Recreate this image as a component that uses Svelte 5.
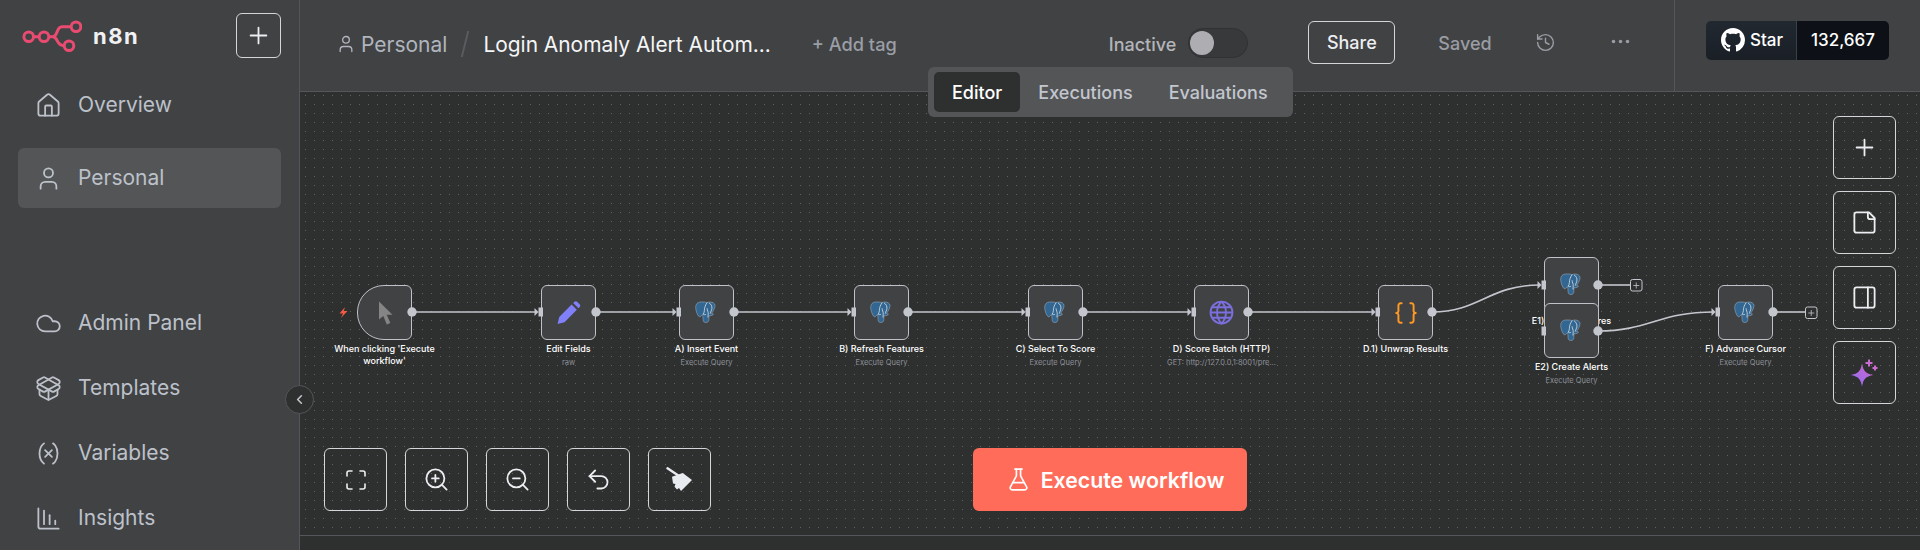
<script>
  const nodes = [
    { x: 358, y: 285, label: "When clicking 'Execute workflow'", icon: 'cursor', trigger: true, lw: 112 },
    { x: 542, y: 285, label: 'Edit Fields', sub: 'raw', icon: 'pen' },
    { x: 680, y: 285, label: 'A) Insert Event', sub: 'Execute Query', icon: 'pg' },
    { x: 855, y: 285, label: 'B) Refresh Features', sub: 'Execute Query', icon: 'pg' },
    { x: 1029, y: 285, label: 'C) Select To Score', sub: 'Execute Query', icon: 'pg' },
    { x: 1195, y: 285, label: 'D) Score Batch (HTTP)', sub: 'GET: http://127.0.0.1:8001/pre...', icon: 'globe' },
    { x: 1379, y: 285, label: 'D.1) Unwrap Results', icon: 'braces' },
    { x: 1545, y: 257, label: 'E1) Insert Features', sub: 'Execute Query', icon: 'pg' },
    { x: 1545, y: 303, label: 'E2) Create Alerts', sub: 'Execute Query', icon: 'pg' },
    { x: 1719, y: 285, label: 'F) Advance Cursor', sub: 'Execute Query', icon: 'pg' }
  ];
  const inputs = [[542, 312], [680, 312], [855, 312], [1029, 312], [1195, 312], [1379, 312], [1545, 285], [1719, 312]];
  const outputs = [[413, 312], [597, 312], [735, 312], [909, 312], [1084, 312], [1249, 312], [1433, 312], [1599, 285], [1599, 331], [1774, 312]];
  const edges = [
    'M413 312H537', 'M597 312H676', 'M735 312H851', 'M909 312H1025', 'M1084 312H1191', 'M1249 312H1375',
    'M1433 312C1480 312 1490 285 1541 285',
    'M1599 285H1631', 'M1599 331C1650 331 1660 312 1715 312', 'M1774 312H1806'
  ];
  const plusBoxes = [[1631, 279], [1806, 306.5]];
</script>

{#snippet lucide(size, paths)}
  <svg class="ic" width={size} height={size} viewBox="0 0 24 24" fill="none" stroke="currentColor" stroke-width="1.6" stroke-linecap="round" stroke-linejoin="round">
    {#each paths as d}<path {d} />{/each}
  </svg>
{/snippet}

{#snippet pg()}
  <svg width="23" height="23" viewBox="0 0 24 24">
    <path fill="#336791" stroke="#dfe8f0" stroke-width=".35" d="M6 1C2.800 1 .5 3.200.7 7c.2 3.200 1.500 7 3 8.800.9 1.100 2 .8 3-.4l1.100-1.200c.3 1 .6 3.200.6 5.200 0 2 1.100 3.100 2.800 3.100 2.200 0 3.300-1.300 3.300-3.200v-4c1 .2 2.100.1 3.100-.3 1.200-.5 2-1.100 1.500-1.600-.5-.5-1.600.2-1.800-.4 1.700-2.500 3.500-5.200 3.600-8.300C21 2.600 18.300 1 15.700 1c-1.300 0-2.400.3-3.100.7-1-.5-2.100-.7-3.100-.7-1.200 0-2.400.1-3.500 0z"/>
    <path fill="none" stroke="#e6edf3" stroke-width=".75" stroke-linecap="round" d="M12.500 1.900C11 4 9.700 7 9.800 10c0 1.500-.6 2.300-1 3.400M8.600 13.600c.8.800 1.800 1 2.600.4M12.600 8c0 2 1.400 3 1.200 5.400-.1 1-.2 2.400-.2 3.400M15 2.200c2 1.200 3 3.400 2.600 6-.2 1.400-1.200 2.800-1.600 4.600"/>
  </svg>
{/snippet}

<div class="app">
  <aside class="side">
    <div class="brand">
      <div class="logo">
        <svg width="60" height="32" viewBox="22 21 60 32" fill="none" stroke="#ea4b71" stroke-width="3">
          <circle cx="28.7" cy="37.7" r="4.8"/>
          <circle cx="44" cy="37.7" r="4.8"/>
          <circle cx="76" cy="27.7" r="4.8"/>
          <circle cx="69" cy="46.7" r="4.8"/>
          <path d="M33.5 37.7H39.2M48.8 37.7H53c5 0 3-10 9-10H71M53 37.7c5 0 3 9 11.200 9"/>
        </svg>
        <span class="word">n8n</span>
      </div>
      <button class="outline new" aria-label="New">
        {@render lucide(27, ['M5 12h14', 'M12 5v14'])}
      </button>
    </div>
    <nav class="nav-top">
      <a class="item">{@render lucide(27, ['M15 21v-8a1 1 0 0 0-1-1h-4a1 1 0 0 0-1 1v8', 'M3 10a2 2 0 0 1 .709-1.528l7-5.999a2 2 0 0 1 2.582 0l7 5.999A2 2 0 0 1 21 10v9a2 2 0 0 1-2 2H5a2 2 0 0 1-2-2z'])}<span>Overview</span></a>
      <a class="item active">{@render lucide(27, ['M19 21v-2a4 4 0 0 0-4-4H9a4 4 0 0 0-4 4v2', 'M16 7a4 4 0 1 1-8 0 4 4 0 0 1 8 0'])}<span>Personal</span></a>
    </nav>
    <nav class="nav-bottom">
      <a class="item">{@render lucide(27, ['M17.5 19H9a7 7 0 1 1 6.71-9h1.79a4.5 4.5 0 1 1 0 9Z'])}<span>Admin Panel</span></a>
      <a class="item">{@render lucide(27, ['M12 22v-9', 'M15.17 2.21a1.67 1.67 0 0 1 1.63 0L21 4.57a1.93 1.93 0 0 1 0 3.36L8.82 14.79a1.655 1.655 0 0 1-1.64 0L3 12.43a1.93 1.93 0 0 1 0-3.36z', 'M20 13v3.87a2.06 2.06 0 0 1-1.11 1.83l-6 3.08a1.93 1.93 0 0 1-1.78 0l-6-3.08A2.06 2.06 0 0 1 4 16.87V13', 'M21 12.43a1.93 1.93 0 0 0 0-3.36L8.83 2.2a1.64 1.64 0 0 0-1.63 0L3 4.57a1.93 1.93 0 0 0 0 3.36l12.18 6.86a1.636 1.636 0 0 0 1.63 0z'])}<span>Templates</span></a>
      <a class="item">{@render lucide(27, ['M8 21s-4-3-4-9 4-9 4-9', 'M16 3s4 2 4 9-4 9-4 9', 'M15 9l-6 6', 'M9 9l6 6'])}<span>Variables</span></a>
      <a class="item">{@render lucide(27, ['M13 17V9', 'M18 17v-3', 'M3 3v16a2 2 0 0 0 2 2h16', 'M8 17V5'])}<span>Insights</span></a>
    </nav>
  </aside>

  <main class="main">
    <header class="head">
      <div class="crumb">
        {@render lucide(20, ['M19 21v-2a4 4 0 0 0-4-4H9a4 4 0 0 0-4 4v2', 'M16 7a4 4 0 1 1-8 0 4 4 0 0 1 8 0'])}
        <span class="crumb-name">Personal</span>
      </div>
      <span class="slash"></span>
      <span class="title">Login Anomaly Alert Autom...</span>
      <span class="tag">+ Add tag</span>
      <span class="inactive">Inactive</span>
      <span class="toggle"><span class="knob"></span></span>
      <button class="outline share">Share</button>
      <span class="saved">Saved</span>
      <span class="history">{@render lucide(21, ['M3 12a9 9 0 1 0 9-9 9.75 9.75 0 0 0-6.74 2.74L3 8', 'M3 3v5h5', 'M12 7v5l4 2'])}</span>
      <span class="more">
        <svg width="21" height="21" viewBox="0 0 24 24" fill="currentColor"><circle cx="4" cy="12" r="2"/><circle cx="12" cy="12" r="2"/><circle cx="20" cy="12" r="2"/></svg>
      </span>
      <div class="gh-wrap">
        <div class="gh">
          <span class="gh-star">
            <svg width="24" height="24" viewBox="0 0 16 16" fill="#fff"><path d="M8 0C3.58 0 0 3.58 0 8c0 3.54 2.29 6.53 5.47 7.59.4.07.55-.17.55-.38 0-.19-.01-.82-.01-1.49-2.01.37-2.53-.49-2.69-.94-.09-.23-.48-.94-.82-1.13-.28-.15-.68-.52-.01-.53.63-.01 1.08.58 1.23.82.72 1.21 1.87.87 2.33.66.07-.52.28-.87.51-1.07-1.78-.2-3.64-.89-3.64-3.95 0-.87.31-1.59.82-2.15-.08-.2-.36-1.02.08-2.12 0 0 .67-.21 2.2.82.64-.18 1.32-.27 2-.27.68 0 1.36.09 2 .27 1.53-1.04 2.2-.82 2.2-.82.44 1.1.16 1.92.08 2.12.51.56.82 1.27.82 2.15 0 3.07-1.87 3.75-3.65 3.95.29.25.54.73.54 1.48 0 1.07-.01 1.93-.01 2.2 0 .21.15.46.55.38A8.013 8.013 0 0016 8c0-4.42-3.58-8-8-8z"/></svg>
            Star
          </span>
          <span class="gh-count">132,667</span>
        </div>
      </div>
    </header>

    <section class="canvas">
      {#each nodes as n}
        <div class="node" style="left:{n.x - 301}px;top:{n.y - 92}px">
          <div class="box" class:trigger={n.trigger}>
            {#if n.icon === 'cursor'}
              <svg width="24" height="24" viewBox="0 0 24 24" fill="#858585"><path d="M6 .5V18.500L10.300 14.900L13.800 23.500L17.300 22L13.800 13.800H19.500Z"/></svg>
            {:else if n.icon === 'pen'}
              <svg width="25" height="25" viewBox="0 0 24 24" fill="#8080f8"><path d="M1.500 23l1.600-6.800L15 4.300l5 5L8.200 21.300z"/><path d="M16.500 2.800l.9-.9a2.200 2.200 0 0 1 3.100 0l2 2a2.200 2.200 0 0 1 0 3.100l-.9.9z"/></svg>
            {:else if n.icon === 'pg'}
              {@render pg()}
            {:else if n.icon === 'globe'}
              <svg width="25" height="25" viewBox="0 0 24 24" fill="none" stroke="#7b6fdd" stroke-width="1.800"><circle cx="12" cy="12" r="10.500"/><path d="M12 1.500a15 15 0 0 0 0 21 15 15 0 0 0 0-21M1.500 12h21M3 7h18M3 17h18"/></svg>
            {:else if n.icon === 'braces'}
              <svg width="26" height="26" viewBox="0 0 24 24" fill="none" stroke="#ff9922" stroke-width="1.800" stroke-linecap="round" stroke-linejoin="round"><path d="M8 3H7a2 2 0 0 0-2 2v5a2 2 0 0 1-2 2 2 2 0 0 1 2 2v5a2 2 0 0 0 2 2h1"/><path d="M16 21h1a2 2 0 0 0 2-2v-5a2 2 0 0 1 2-2 2 2 0 0 1-2-2V5a2 2 0 0 0-2-2h-1"/></svg>
            {/if}
          </div>
          <div class="label" style={n.lw ? `width:${n.lw}px` : ''}>{n.label}</div>
          {#if n.sub}<div class="sub">{n.sub}</div>{/if}
        </div>
      {/each}

      <svg class="wires" width="1619" height="443" viewBox="301 92 1619 443" fill="none">
        {#each edges as d}<path {d} stroke="#c3c6cd" stroke-width="1.600"/>{/each}
        {#each inputs as [x, y]}
          <path d="M{x - 6.500} {y - 4}L{x - 2.500} {y}L{x - 6.500} {y + 4}Z" fill="#c3c6cd"/>
          <rect x={x - 2.500} y={y - 4.500} width="4.500" height="9" fill="#c3c6cd"/>
        {/each}
        <rect x="1542.500" y="326.500" width="4.500" height="9" fill="#c3c6cd"/>
        {#each outputs as [x, y]}<circle cx={x} cy={y} r="4.700" fill="#c3c6cd"/>{/each}
        {#each plusBoxes as [x, y]}
          <rect x={x + .5} y={y + .5} width="11.500" height="11.500" rx="2" fill="#2e2f2f" stroke="#c3c6cd"/>
          <path d="M{x + 6.250} {y + 3.500}v6M{x + 3.250} {y + 6.500}h6" stroke="#c3c6cd" stroke-width=".8"/>
        {/each}
        <path d="M346 307L340.500 313.500H344L342 318L348.500 311H344.800Z" fill="#ee5b46"/>
      </svg>

      <div class="tools-right">
        <button class="outline tool">{@render lucide(27, ['M5 12h14', 'M12 5v14'])}</button>
        <button class="outline tool">{@render lucide(27, ['M16 3H5a2 2 0 0 0-2 2v14a2 2 0 0 0 2 2h14a2 2 0 0 0 2-2V8Z', 'M15 3v4a2 2 0 0 0 2 2h4'])}</button>
        <button class="outline tool">{@render lucide(27, ['M5 3h14a2 2 0 0 1 2 2v14a2 2 0 0 1-2 2H5a2 2 0 0 1-2-2V5a2 2 0 0 1 2-2z', 'M15 3v18'])}</button>
        <button class="outline tool" aria-label="AI">
          <svg width="33" height="33" viewBox="0 0 33 33">
            <defs><linearGradient id="sp" x1="0" y1="1" x2="1" y2="0"><stop offset="0" stop-color="#8a6cf5"/><stop offset="1" stop-color="#d168c8"/></linearGradient></defs>
            <path fill="url(#sp)" d="M14 7.500c1.300 7.500 3.500 10 11.500 11.500-8 1.500-10.200 4-11.500 11.500C12.700 23 10.500 20.500 2.500 19c8-1.500 10.200-4 11.500-11.500z"/>
            <path fill="none" stroke="#c96bd0" stroke-width="2" d="M21 3.500v7M17.500 7h7M27 9.500v5M24.500 12h5"/>
          </svg>
        </button>
      </div>

      <div class="tools-bottom">
        <button class="outline tool">{@render lucide(24, ['M8 3H5a2 2 0 0 0-2 2v3', 'M21 8V5a2 2 0 0 0-2-2h-3', 'M3 16v3a2 2 0 0 0 2 2h3', 'M16 21h3a2 2 0 0 0 2-2v-3'])}</button>
        <button class="outline tool">{@render lucide(27, ['M19 11a8 8 0 1 1-16 0 8 8 0 0 1 16 0', 'M21 21l-4.350-4.350', 'M11 8v6', 'M8 11h6'])}</button>
        <button class="outline tool">{@render lucide(27, ['M19 11a8 8 0 1 1-16 0 8 8 0 0 1 16 0', 'M21 21l-4.350-4.350', 'M8 11h6'])}</button>
        <button class="outline tool">{@render lucide(27, ['M9 14 4 9l5-5', 'M4 9h10.500a5.500 5.500 0 0 1 5.500 5.500 5.500 5.500 0 0 1-5.500 5.500H11'])}</button>
        <button class="outline tool" aria-label="Tidy up">
          <svg width="27" height="27" viewBox="0 0 27 27" fill="#e8ebf0"><path d="M1.500 2.300L13 10" stroke="#e8ebf0" stroke-width="2.400" stroke-linecap="round"/><path d="M6 10.700L16.700 7L26 14L15 25L13 22L11 23.500L8.500 20.700L9.500 18L7 17.500Z"/></svg>
        </button>
        <button class="run">
          {@render lucide(25, ['M14 2v6a2 2 0 0 0 .245.96l5.510 10.080A2 2 0 0 1 18 22H6a2 2 0 0 1-1.755-2.960l5.510-10.080A2 2 0 0 0 10 8V2', 'M6.453 15h11.094', 'M8.500 2h7'])}
          Execute workflow
        </button>
      </div>
    </section>
    <div class="logbar"></div>
  </main>

  <button class="collapse" aria-label="Collapse">
    <svg width="15" height="15" viewBox="0 0 24 24" fill="none" stroke="currentColor" stroke-width="2.5" stroke-linecap="round" stroke-linejoin="round"><path d="m15 18-6-6 6-6"/></svg>
  </button>

  <div class="tabs">
    <span class="tab on">Editor</span>
    <span class="tab">Executions</span>
    <span class="tab">Evaluations</span>
  </div>
</div>

<style>
  :global(body) { margin: 0; background: #2e2f2f; }
  .app {
    position: relative;
    display: flex;
    width: 1920px;
    height: 550px;
    overflow: hidden;
    font-family: Inter, "Liberation Sans", sans-serif;
    color: #fff;
  }
  button { font-family: inherit; cursor: pointer; padding: 0; }
  .ic { display: block; flex: none; }

  .outline {
    display: flex;
    align-items: center;
    justify-content: center;
    background: transparent;
    border: 1.500px solid #d4d6da;
    border-radius: 6px;
    color: #eceef1;
  }

  .side {
    flex: none;
    width: 300px;
    height: 550px;
    box-sizing: border-box;
    background: #414244;
    border-right: 1px solid #55565a;
    display: flex;
    flex-direction: column;
  }
  .brand {
    display: flex;
    align-items: center;
    justify-content: space-between;
    padding: 13px 18px 0 22px;
  }
  .logo { display: flex; align-items: center; gap: 11px; }
  .logo svg { display: block; }
  .word { font-size: 22px; font-weight: 700; letter-spacing: 1.5px; color: #f1f1f3; }
  .new { width: 45px; height: 45px; }
  .nav-top { display: flex; flex-direction: column; gap: 13px; padding: 17px 18px 0 18px; }
  .nav-bottom { display: flex; flex-direction: column; gap: 5px; padding: 85px 18px 0 18px; }
  .item {
    display: flex;
    align-items: center;
    gap: 16px;
    height: 60px;
    padding-left: 17px;
    border-radius: 6px;
    font-size: 21px;
    font-weight: 400;
    color: #bcc1ca;
  }
  .item span { margin-bottom: 2px; }
  .nav-bottom .item span { margin-bottom: 1px; }
  .active { background: #545557; }

  .collapse {
    position: absolute;
    left: 285px;
    top: 385px;
    width: 29px;
    height: 29px;
    border-radius: 50%;
    background: #2e2f2f;
    border: 1px solid #55565a;
    color: #c3c6cd;
    display: flex;
    align-items: center;
    justify-content: center;
  }

  .main { flex: 1; min-width: 0; display: flex; flex-direction: column; }

  .head {
    flex: none;
    height: 92px;
    box-sizing: border-box;
    background: #414244;
    border-bottom: 1px solid #55565a;
    display: flex;
    align-items: center;
    padding: 0 0 5px 36px;
  }
  .crumb { display: flex; align-items: center; gap: 5px; color: #b0b5be; margin-top: 2px; }
  .crumb-name { font-size: 21px; }
  .slash {
    width: 2px;
    height: 26px;
    margin: 2px 0 0 17px;
    background: #5b5c60;
    transform: skewX(-14deg);
  }
  .title { margin: 2px 0 0 17px; font-size: 20.900px; color: #f4f5f7; white-space: nowrap; }
  .tag { margin: 2px 0 0 41px; font-size: 18.200px; font-weight: 500; color: #9a9ea6; }
  .inactive { margin: 2px 0 0 212px; font-size: 18px; font-weight: 500; color: #b3b5ba; }
  .toggle {
    margin-left: 12px;
    width: 60px;
    height: 30px;
    box-sizing: border-box;
    border-radius: 15px;
    background: #38393b;
    border: 1px solid #303133;
    display: flex;
    align-items: center;
    padding-left: 1px;
  }
  .knob { width: 24px; height: 24px; border-radius: 50%; background: #aeaeb2; }
  .share {
    margin: 0 0 2px 60px;
    width: 87px;
    height: 43px;
    font-size: 18px;
    font-weight: 500;
  }
  .saved { margin-left: 43px; font-size: 18px; font-weight: 500; color: #9a9da3; }
  .history { margin: 0 0 2px 43px; color: #9a9da3; }
  .more { margin-left: 54px; color: #9a9da3; }
  .gh-wrap {
    align-self: stretch;
    display: flex;
    align-items: center;
    margin: 0 0 -5px auto;
    padding: 0 31px 11px 31px;
    border-left: 1px solid #55565a;
  }
  .gh {
    display: flex;
    height: 39px;
    border-radius: 5px;
    overflow: hidden;
    font-size: 17px;
    font-weight: 500;
  }
  .gh-star {
    width: 91px;
    box-sizing: border-box;
    padding-left: 15px;
    display: flex;
    align-items: center;
    gap: 5px;
    background: linear-gradient(#212830, #1a1f26);
    border-right: 1px solid #3a4048;
  }
  .gh-count {
    width: 92px;
    display: flex;
    align-items: center;
    justify-content: center;
    background: #0d1117;
  }

  .canvas {
    position: relative;
    flex: none;
    height: 443px;
    background-color: #2e2f2f;
    background-image: radial-gradient(circle at 5.500px 3.500px, #5f6061 .6px, transparent .9px);
    background-size: 9px 9px;
  }
  .logbar { flex: 1; background: #2e2f2f; border-top: 1px solid #55565a; }

  .node {
    position: absolute;
    width: 55px;
    display: flex;
    flex-direction: column;
    align-items: center;
  }
  .box {
    flex: none;
    width: 55px;
    height: 55px;
    box-sizing: border-box;
    background: #414244;
    border: 1.500px solid #bfc2c9;
    border-radius: 6px;
    display: flex;
    align-items: center;
    justify-content: center;
  }
  .trigger { border-radius: 27px 6px 6px 27px; }
  .label {
    flex: none;
    width: 150px;
    margin-top: 3px;
    font-size: 9px;
    font-weight: 500;
    line-height: 12px;
    text-align: center;
    color: #fff;
  }
  .sub {
    flex: none;
    width: 150px;
    margin-top: 2px;
    font-size: 7.500px;
    line-height: 11px;
    text-align: center;
    color: #8d9199;
    white-space: nowrap;
  }
  .wires { position: absolute; left: 0; top: 0; pointer-events: none; }

  .tool { width: 63px; height: 63px; flex: none; }
  .tools-right {
    position: absolute;
    right: 24px;
    top: 24px;
    display: flex;
    flex-direction: column;
    gap: 12px;
  }
  .tools-bottom {
    position: absolute;
    left: 24px;
    top: 356px;
    display: flex;
    gap: 18px;
  }
  .run {
    margin-left: 244px;
    width: 274px;
    height: 63px;
    box-sizing: border-box;
    padding-left: 10px;
    border: none;
    border-radius: 6px;
    background: #ff6d5a;
    color: #fff;
    font-size: 21.300px;
    font-weight: 600;
    display: flex;
    align-items: center;
    justify-content: center;
    gap: 10px;
  }

  .tabs {
    position: absolute;
    left: 928px;
    top: 67px;
    width: 365px;
    height: 50px;
    box-sizing: border-box;
    padding: 5px 6px;
    background: #545557;
    border-radius: 6px;
    display: flex;
    align-items: stretch;
    font-size: 18px;
    font-weight: 500;
    color: #c2c6ce;
  }
  .tab { display: flex; align-items: center; padding: 0 18px; border-radius: 5px; }
  .tab.on { background: #2e2f2f; color: #fff; }
</style>
